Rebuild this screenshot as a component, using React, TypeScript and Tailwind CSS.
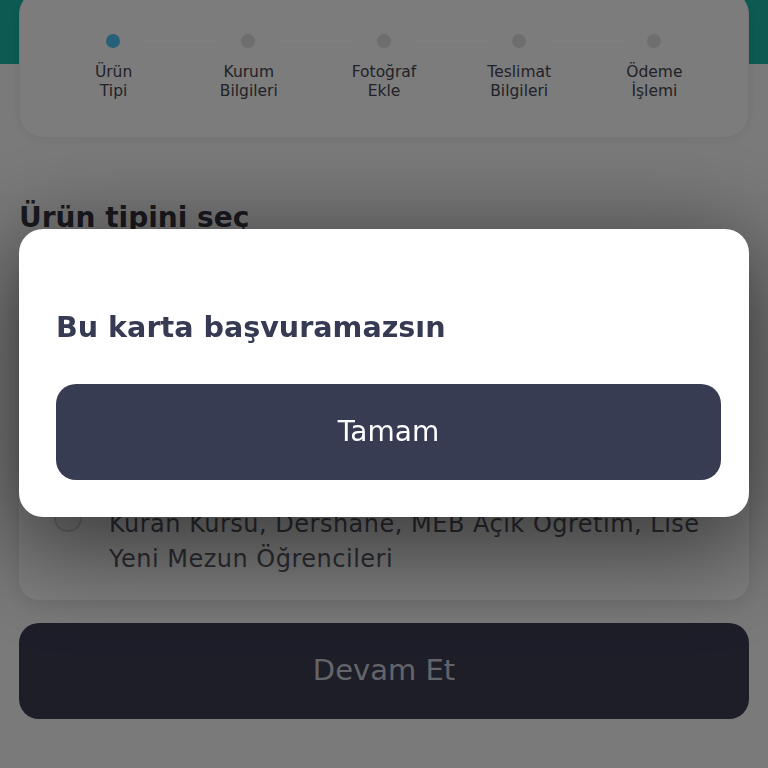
import React from "react";

const steps = [
  ["Ürün", "Tipi"],
  ["Kurum", "Bilgileri"],
  ["Fotoğraf", "Ekle"],
  ["Teslimat", "Bilgileri"],
  ["Ödeme", "İşlemi"],
];

const options = [
  ["Üniversite, Yüksek Lisans, Doktora, Önlisans", "Öğrencileri"],
  ["İlkokul, Ortaokul, Lise Öğrencileri ve", "Öğretmenler"],
  ["Kuran Kursu, Dershane, MEB Açık Öğretim, Lise", "Yeni Mezun Öğrencileri"],
];

export default function App() {
  return (
    <div
      className="relative min-h-screen bg-[#f4f4f4] overflow-hidden"
      style={{ fontFamily: "'DejaVu Sans', 'Noto Sans', sans-serif" }}
    >
      {/* ===== HEADER ===== */}
      <div className="h-16 bg-[#18b4a4]"></div>

      <div className="px-[19px]">
        {/* ===== STEPS CARD ===== */}
        <div className="-mt-[74px] h-[148px] rounded-[24px] bg-[#f8f8f8] shadow-[0_2px_8px_rgba(0,0,0,0.06)] border border-[#ececec] pt-[43px]">
          <div className="flex items-center pl-[86px] pr-[87px]">
            {steps.map((_, i) => (
              <React.Fragment key={i}>
                <div
                  className={
                    i === 0
                      ? "w-[14px] h-[14px] rounded-full bg-[#4fc0f2] shrink-0"
                      : "w-[14px] h-[14px] rounded-full bg-[#dcdcdc] shrink-0"
                  }
                ></div>
                {i < steps.length - 1 && (
                  <div className="flex-1 h-[2px] mx-[24px] bg-white"></div>
                )}
              </React.Fragment>
            ))}
          </div>
          <div className="grid grid-cols-5 px-[26px] mt-[15px]">
            {steps.map((s, i) => (
              <div
                key={i}
                className="text-center text-[15.5px] leading-[19px] text-[#444450]"
              >
                <p>{s[0]}</p>
                <p>{s[1]}</p>
              </div>
            ))}
          </div>
        </div>

        {/* ===== TITLE ===== */}
        <h1 className="mt-[63px] text-[28px] leading-[34px] font-bold text-[#33333f]">
          Ürün tipini seç
        </h1>

        {/* ===== OPTIONS ===== */}
        <div className="mt-[20px] bg-white rounded-[20px] shadow-[0_4px_16px_rgba(0,0,0,0.08)] pt-[24px] pb-[23px] pl-[35px] pr-[30px] flex flex-col gap-[44px]">
          {options.map((o, i) => (
            <div key={i} className="flex items-start gap-[27px]">
              <div className="mt-[-3px] w-[28px] h-[28px] rounded-full border-2 border-[#d4d4d8] bg-[#f5f5f5] shrink-0"></div>
              <div className="text-[24px] leading-[35px] tracking-[0.5px] text-[#5a5a68] whitespace-nowrap">
                <p>{o[0]}</p>
                <p>{o[1]}</p>
              </div>
            </div>
          ))}
        </div>

        {/* ===== CONTINUE ===== */}
        <button className="mt-[23px] w-full h-[96px] rounded-[20px] bg-[#3a3c51] text-[29px] text-[#c8cad4]">
          Devam Et
        </button>
      </div>

      {/* ===== MODAL ===== */}
      <div className="fixed inset-0 bg-black/50 px-[19px] pt-[229px]">
        <div className="h-[288px] bg-white rounded-[24px] shadow-[0_24px_100px_10px_rgba(0,0,0,0.55)] pl-[37px] pr-[28px] pt-[80px]">
          <h2 className="text-[28.6px] leading-[36px] font-bold text-[#363a52]">
            Bu karta başvuramazsın
          </h2>
          <button className="mt-[39px] w-full h-[96px] rounded-[20px] bg-[#383c53] text-[28px] text-white">
            Tamam
          </button>
        </div>
      </div>
    </div>
  );
}
